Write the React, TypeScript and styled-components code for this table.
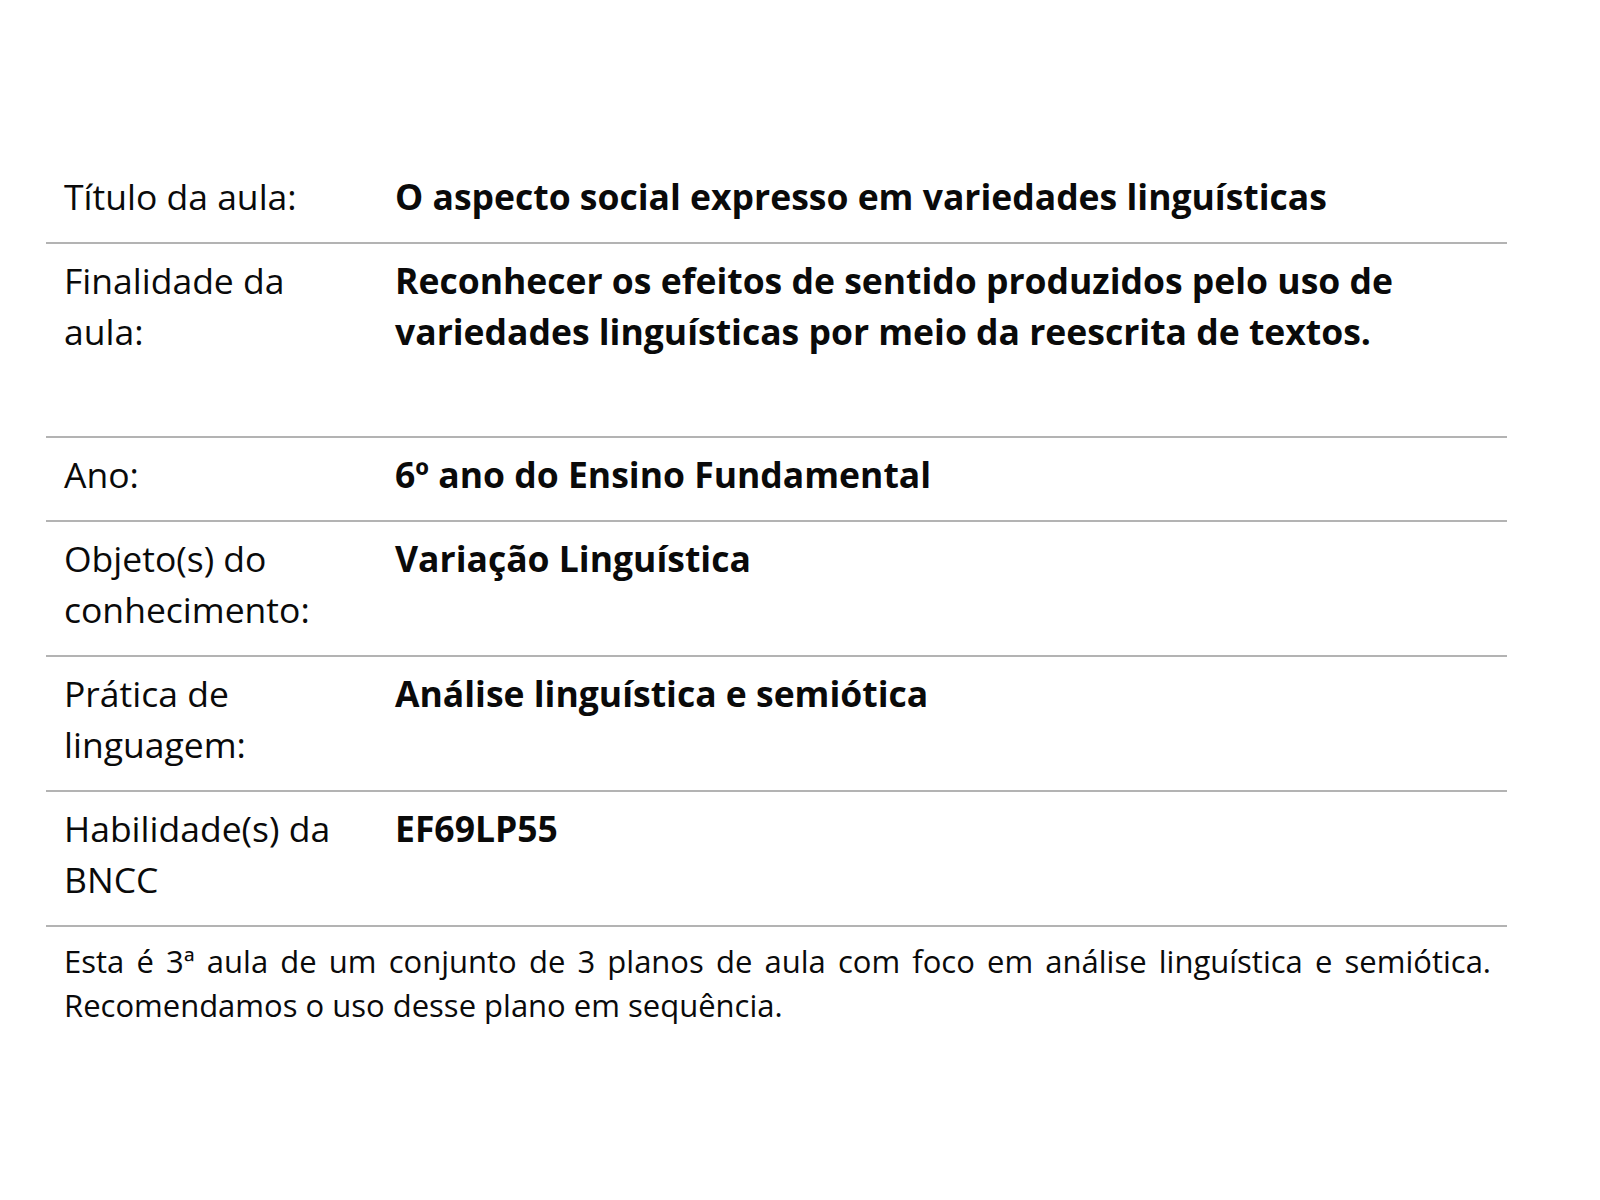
import styled, { createGlobalStyle } from "styled-components"

const GlobalStyle = createGlobalStyle`
  body {
    margin: 0;
    background: #ffffff;
    font-family: "Open Sans", "Noto Sans", sans-serif;
    color: #0a0a0a;
  }
`

type Row = {
  label: string
  value: string
  extra?: boolean
}

const rows: Row[] = [
  { label: "Título da aula:", value: "O aspecto social expresso em variedades linguísticas" },
  {
    label: "Finalidade da aula:",
    value: "Reconhecer os efeitos de sentido produzidos pelo uso de variedades linguísticas por meio da reescrita de textos.",
    extra: true,
  },
  { label: "Ano:", value: "6º ano do Ensino Fundamental" },
  { label: "Objeto(s) do conhecimento:", value: "Variação Linguística" },
  { label: "Prática de linguagem:", value: "Análise linguística e semiótica" },
  { label: "Habilidade(s) da BNCC", value: "EF69LP55" },
]

export default function App() {
  return (
    <>
      <GlobalStyle />
      <Page>
        <Table>
          {rows.map((row) => (
            <TableRow key={row.label} $extra={row.extra}>
              <Label>{row.label}</Label>
              <Value>{row.value}</Value>
            </TableRow>
          ))}
        </Table>
        <Note>
          Esta é 3ª aula de um conjunto de 3 planos de aula com foco em análise linguística e semiótica.
          Recomendamos o uso desse plano em sequência.
        </Note>
      </Page>
    </>
  )
}

const Page = styled.div`
  width: 1461px;
  margin-left: 46px;
  padding-top: 160px;
`

const Table = styled.div`
  display: flex;
  flex-direction: column;
`

const TableRow = styled.div<{ $extra?: boolean }>`
  display: grid;
  grid-template-columns: 331px 1fr;
  padding: 11px 16px ${(p) => (p.$extra ? "79px" : "20px")} 18px;
  border-bottom: 2px solid #b3b3b3;
  font-size: 35.5px;
  line-height: 51px;
`

const Label = styled.div`
  font-weight: 400;
  padding-right: 40px;
`

const Value = styled.div`
  font-weight: 700;
`

const Note = styled.p`
  margin: 0;
  padding: 12px 16px 0 18px;
  font-size: 31px;
  line-height: 44px;
  text-align: justify;
`
